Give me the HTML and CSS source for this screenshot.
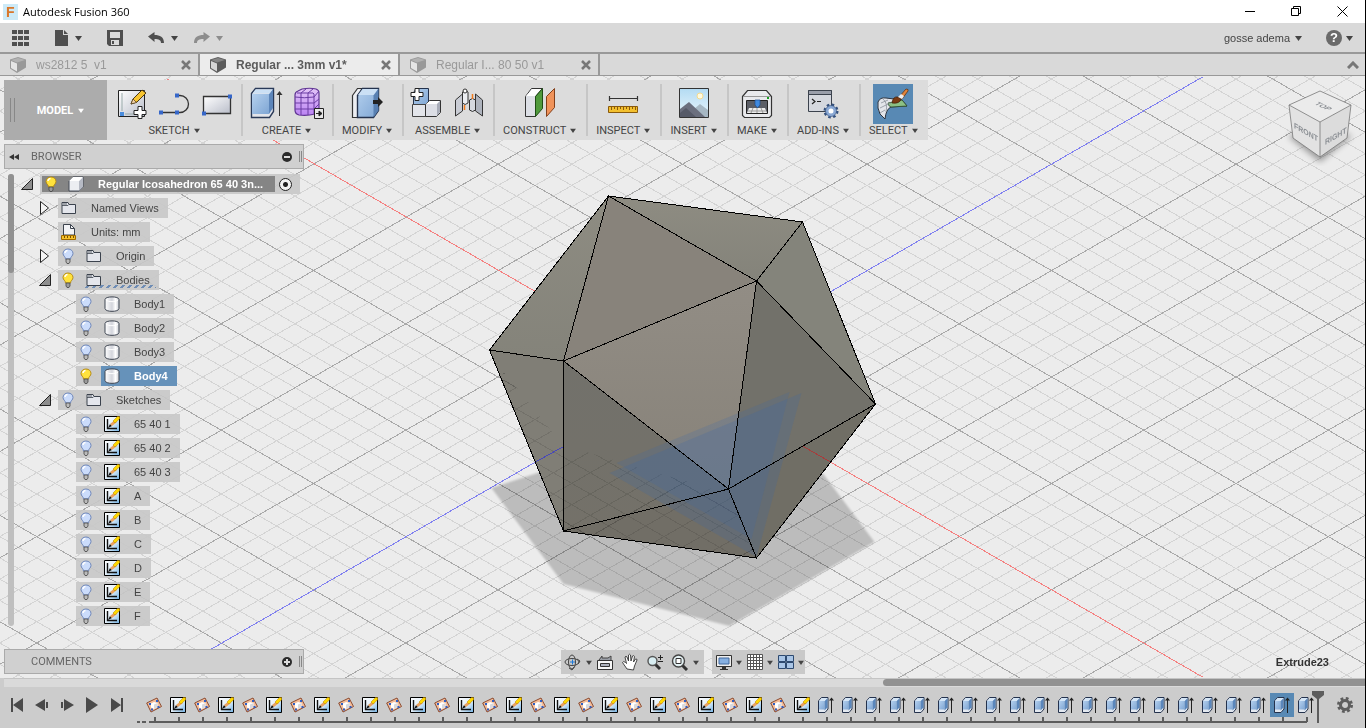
FILE: index.html
```html
<!DOCTYPE html>
<html lang="en">
<head>
    <meta charset="UTF-8">
    <meta name="viewport" content="width=device-width, initial-scale=1.0">
    <title>Autodesk Fusion 360</title>
    <link rel="stylesheet" href="styles.css">
</head>
<body>

<!-- Shared icons -->
<svg class="defs" width="0" height="0" aria-hidden="true">
    <defs>
        <linearGradient id="gWhite" x1="0" y1="0" x2="1" y2="1"><stop offset="0" stop-color="#fff"/><stop offset="1" stop-color="#b9bdc9"/></linearGradient>
        <linearGradient id="gBlue" x1="0" y1="0" x2="1" y2="1"><stop offset="0" stop-color="#b4d0ee"/><stop offset="1" stop-color="#7fa6d4"/></linearGradient>
        <linearGradient id="gCyl" x1="0" y1="0" x2="1" y2="0"><stop offset="0" stop-color="#fff"/><stop offset=".5" stop-color="#d3d5dc"/><stop offset=".75" stop-color="#fff"/><stop offset="1" stop-color="#c9ccd4"/></linearGradient>
        <linearGradient id="gPurple" x1="0" y1="0" x2="0" y2="1"><stop offset="0" stop-color="#e3c5f7"/><stop offset="1" stop-color="#bb84f3"/></linearGradient>
        <linearGradient id="gSketch" x1="0" y1="0" x2="1" y2="1"><stop offset="0" stop-color="#fff"/><stop offset=".5" stop-color="#e3f0fa"/><stop offset="1" stop-color="#6fb0e4"/></linearGradient>
        <linearGradient id="gSky" x1="0" y1="0" x2="0" y2="1"><stop offset="0" stop-color="#b3dbf3"/><stop offset="1" stop-color="#eaf6fc"/></linearGradient>
    </defs>
    <symbol id="caret" viewBox="0 0 7 6"><path d="M0 1h7L3.500 6z" fill="currentColor"/></symbol>
    <symbol id="part" viewBox="0 0 16 16">
        <path d="M0 2.500L8 0l8 2.500v8L7 16 0 11.500z" fill="currentColor"/>
        <path d="M1 4l6 2.500v8L1 11z" fill="#fff" opacity=".75"/>
        <path d="M1 3l6 2.500L15 3 8 1z" fill="#fff" opacity=".25"/>
    </symbol>
    <symbol id="close" viewBox="0 0 10 10"><path d="M1 1l8 8M9 1L1 9" stroke="currentColor" stroke-width="2.500"/></symbol>
    <symbol id="bulbOn" viewBox="0 0 12 16">
        <path d="M6 1C3 1 1 3 1 5.500 1 8 3.500 8.500 3.500 11h5C8.500 8.500 11 8 11 5.500 11 3 9 1 6 1z" fill="#ffe23c" stroke="#b58a15"/>
        <path d="M3 5c0-1 1-2.500 2.500-2.500" stroke="#fff" stroke-width="1.500" fill="none"/>
        <path d="M4 11h4v3l-1 1.500H5L4 14z" fill="#999" stroke="#444" stroke-width=".8"/>
    </symbol>
    <symbol id="bulbOff" viewBox="0 0 12 16">
        <path d="M6 1C3 1 1 3 1 5.500 1 8 3.500 8.500 3.500 11h5C8.500 8.500 11 8 11 5.500 11 3 9 1 6 1z" fill="#cbdcfb" stroke="#6d85b8"/>
        <path d="M3 5c0-1 1-2.500 2.500-2.500" stroke="#fff" stroke-width="1.500" fill="none"/>
        <path d="M4 11h4v3l-1 1.500H5L4 14z" fill="#bbb" stroke="#444" stroke-width=".8"/>
    </symbol>
    <symbol id="folder" viewBox="0 0 16 16">
        <path d="M1 13.500V2.500h6l1 2h6.500v9z" fill="#e4e6ec" stroke="#3b424d"/>
        <path d="M1 5.500h6l1-1M2 4h4" stroke="#3b424d" fill="none" stroke-width=".8"/>
    </symbol>
    <symbol id="units" viewBox="0 0 16 16">
        <path d="M2.500 11V.5h7l4 4V11z" fill="#f2f3f6" stroke="#3b424d"/><path d="M9.500.5v4h4" fill="none" stroke="#3b424d"/>
        <path d="M.5 11.500h14v4H.5z" fill="#f6c22c" stroke="#a06a00"/><path d="M3.500 12v2M6.500 12v2M9.500 12v2M12.500 12v2" stroke="#7a5000"/>
    </symbol>
    <symbol id="cube" viewBox="0 0 16 16">
        <path d="M1 5l4-4h10v10l-4 4H1z" fill="#eceef2" stroke="#444b57"/><path d="M11 5l4-4v10l-4 4z" fill="#b6bac4"/><path d="M1 5l4-4h10l-4 4z" fill="#fff"/>
    </symbol>
    <symbol id="body" viewBox="0 0 16 16">
        <path d="M1 3.500C1 0 15 0 15 3.500v9c0 3.800-14 3.800-14 0z" fill="url(#gCyl)" stroke="#3f4652"/>
        <path d="M2 4c2 2.200 10 2.200 12 0" fill="none" stroke="#fff"/>
    </symbol>
    <symbol id="sketch" viewBox="0 0 16 16">
        <path d="M.5.500h15v15H.5z" fill="url(#gSketch)" stroke="#000"/>
        <path d="M3.500 3v9.500H13" fill="none" stroke="#111" stroke-width="1.400"/>
        <path d="M4 12l2-4 2 2z" fill="#111"/><path d="M6 8l5-4 2 2-5 4z" fill="#e9a160"/>
        <path d="M9 5l4.500-4.500 2.200.2v2L11 7z" fill="#ffd800" stroke="#b98300" stroke-width=".5"/>
    </symbol>
    <symbol id="plane" viewBox="0 0 16 16">
        <path d="M.7 6L11 1l4.500 8.500L5 15z" fill="#f3bd9b" stroke="#8a4a30"/>
        <path d="M5 6.500L8 5l3.500 1v4L8 12l-3-1.500z" fill="#fff"/><path d="M8 7.500L11.500 6v4L8 12z" fill="#d9d9de"/>
        <path d="M3 6h2v2H3zM10 3h2v2h-2zM11.500 9h2v2h-2zM5 11.500h2v2H5z" fill="#2f5fc4"/>
    </symbol>
    <symbol id="extrude" viewBox="0 0 16 16">
        <path d="M.5 4l3-3.500H10V12l-3 3.500H.5z" fill="#e4e9f0" stroke="#24324d"/>
        <path d="M1 4h5.500v8.500H1z" fill="url(#gBlue)"/><path d="M6.500 4l3-3v9.500l-3 3z" fill="#5b87bc"/><path d="M1 4l3-3h5.500l-3 3z" fill="#d5e6f7"/>
        <path d="M13.500 2v14" stroke="#222"/><path d="M11 3.500L13.500.5 16 3.500z" fill="#222"/>
    </symbol>
    <symbol id="open" viewBox="0 0 12 12"><path d="M11.500.5v11H.5z" fill="#8e8e8e" stroke="#222"/></symbol>
    <symbol id="shut" viewBox="0 0 12 14"><path d="M1.500.5v13l8-6.500z" fill="#f4f4f4" stroke="#222"/></symbol>
</svg>

<!-- Title bar -->
<header class="title-bar">
    <svg class="app-logo" width="15" height="16" viewBox="0 0 15 16"><path d="M0 0h15v16H0z" fill="#cdeaf7"/><text x="3" y="13" class="logo-letter">F</text></svg>
    <h1 class="app-title">Autodesk Fusion 360</h1>
    <div class="window-buttons">
        <button aria-label="Minimize"><svg width="11" height="11"><path d="M0 5.500h10" stroke="#000"/></svg></button>
        <button aria-label="Restore"><svg width="11" height="11"><path d="M.5 2.500h7v7h-7zM2.500 2.500v-2h7v7h-2" fill="none" stroke="#000"/></svg></button>
        <button aria-label="Close"><svg width="11" height="11"><path d="M.5.500l10 10M10.500.5l-10 10" stroke="#000"/></svg></button>
    </div>
</header>

<!-- Quick access bar -->
<div class="quick-bar">
    <button class="quick" aria-label="Data panel"><svg width="18" height="18" fill="#4f4f4f"><path d="M0 1h5v4H0zM6 1h5v4H6zM12 1h5v4h-5zM0 7h5v4H0zM6 7h5v4H6zM12 7h5v4h-5zM0 13h5v4H0zM6 13h5v4H6zM12 13h5v4h-5z"/></svg></button>
    <button class="quick" aria-label="File"><svg width="14" height="16" fill="#4f4f4f"><path d="M0 0h8v5h5v11H0zM9 0l4 4H9z"/></svg><svg class="caret"><use href="#caret"/></svg></button>
    <button class="quick" aria-label="Save"><svg width="16" height="16"><path d="M0 0h16v16H2l-2-2z" fill="#4f4f4f"/><path d="M3 2h10v6H3zM4 10h8v5H4z" fill="#dadada"/><path d="M5 11h2v3H5z" fill="#4f4f4f"/></svg></button>
    <button class="quick undo" aria-label="Undo"><svg width="17" height="12"><path d="M0 4.500L6.500 0v3C12 3 16 5 16 11h-3c0-3-2-4-6.500-4v3z" fill="#4f4f4f"/></svg><svg class="caret"><use href="#caret"/></svg></button>
    <button class="quick redo" aria-label="Redo"><svg width="17" height="12"><path d="M17 4.500L10.500 0v3C5 3 1 5 1 11h3c0-3 2-4 6.500-4v3z" fill="#8d8d8d"/></svg><svg class="caret"><use href="#caret"/></svg></button>
    <button class="account">gosse adema <svg class="caret"><use href="#caret"/></svg></button>
    <button class="help" aria-label="Help"><span class="help-mark">?</span><svg class="caret"><use href="#caret"/></svg></button>
</div>

<!-- Document tabs -->
<nav class="tabs">
    <div class="tab"><svg class="tab-icon"><use href="#part"/></svg><a href="#">ws2812 5&nbsp; v1</a><button aria-label="Close tab"><svg width="10" height="10"><use href="#close"/></svg></button></div>
    <div class="tab active"><svg class="tab-icon"><use href="#part"/></svg><a href="#">Regular ... 3mm v1*</a><button aria-label="Close tab"><svg width="10" height="10"><use href="#close"/></svg></button></div>
    <div class="tab"><svg class="tab-icon"><use href="#part"/></svg><a href="#">Regular I... 80 50 v1</a><button aria-label="Close tab"><svg width="10" height="10"><use href="#close"/></svg></button></div>
    <button class="collapse" aria-label="Collapse toolbar"><svg width="12" height="8"><path d="M1 7l5-5 5 5" fill="none" stroke="#777" stroke-width="3"/></svg></button>
</nav>

<main class="viewport">
    <!-- Model canvas -->
    <svg class="canvas" viewBox="0 76 1366 602" preserveAspectRatio="xMidYMid slice">
        <defs>
            <clipPath id="lowerBody"><path d="M503 370l60 75 170 50 24 62-193-26-60-140z"/></clipPath>
            <linearGradient id="fTop" x1="0" y1="0" x2="0" y2="1"><stop offset="0" stop-color="#8e8c82"/><stop offset="1" stop-color="#84837a"/></linearGradient>
            <linearGradient id="fMid" x1="0" y1="0" x2="0" y2="1"><stop offset="0" stop-color="#928d85"/><stop offset="1" stop-color="#878279"/></linearGradient>
            <linearGradient id="fLow" x1="0" y1="0" x2="0" y2="1"><stop offset="0" stop-color="#72716b"/><stop offset="1" stop-color="#747169"/></linearGradient>
            <filter id="soft"><feGaussianBlur stdDeviation="1"/></filter>
        </defs>
        <path id="minor" class="grid-minor"/>
        <path id="major" class="grid-major"/>
        <path class="axis-z" d="M212 649L1203 77"/>
        <path class="axis-x" d="M168 79L1203 677"/>
        <path d="M492 488l72 96 166 42 145-84-52-69-100-60z" fill="#000" opacity=".2" filter="url(#soft)"/>
        <g class="faces">
            <path d="M609 196L490 350l74 11z" fill="url(#fTop)"/>
            <path d="M609 196L564 361l193-80z" fill="#88837b"/>
            <path d="M609 196l194 26-46 59z" fill="url(#fTop)"/>
            <path d="M803 222l-46 59 119 123z" fill="#84847b"/>
            <path d="M757 281l119 123-147 85z" fill="#72716a"/>
            <path d="M757 281l-193 80 165 128z" fill="url(#fMid)"/>
            <path d="M564 361v170l165-42z" fill="url(#fLow)"/>
            <path d="M564 531l193 27-28-69z" fill="#716e66"/>
            <path d="M757 558l119-154-147 85z" fill="#706e65"/>
            <path d="M490 350l74 11v170z" fill="#807e76"/>
        </g>
        <g class="through" clip-path="url(#lowerBody)">
            <use href="#minor"/>
            <use href="#major"/>
        </g>
        <path class="axis-z dim" d="M536 462l27-15"/>
        <path class="axis-x dim" d="M803 446l28 16"/>
        <path d="M802 393L610 473l147 84z" fill="#3c6ba8" opacity=".22"/>
        <path d="M790 392l-173 71 135 76z" fill="#3c6ba8" opacity=".2"/>
        <path class="edges" d="M609 196L803 222 876 404 757 558 564 531 490 350zM609 196L564 361 757 281zM803 222L757 281 876 404 729 489M757 281L729 489 564 361 490 350M564 361V531L729 489 757 558"/>
    </svg>

    <div class="overlay">
        <div class="toolbar">
            <button class="workspace">MODEL <svg class="caret"><use href="#caret"/></svg></button>

            <div class="group">
                <div class="icons">
                    <button aria-label="Create sketch"><svg class="icon" viewBox="0 0 40 40">
                        <path d="M7.500 6.500h26v26h-26z" fill="url(#gWhite)" stroke="#222"/>
                        <path d="M9 28h4v4H9z" fill="#4a8cdc"/><path d="M11 9v18M14 30h10" stroke="#9aa"/>
                        <path d="M20 20l2-5L31 6l4 3-9 9z" fill="#f7c531" stroke="#4d3813"/><path d="M20 20l2-5 3.500 3.500z" fill="#f2d2a9" stroke="#4d3813" stroke-width=".7"/>
                        <path d="M27 22.500h4v4h4v4h-4v4h-4v-4h-4v-4h4z" fill="#fff" stroke="#222"/>
                    </svg></button>
                    <button aria-label="Line"><svg class="icon" viewBox="0 0 40 40">
                        <path d="M7 28.500h19a8.500 8.500 0 0 0 0-17h-3" fill="none" stroke="#333" stroke-width="1.300"/>
                        <path d="M5 26.500h4v4H5zM21 26.500h4v4h-4zM21 9.500h4v4h-4z" fill="#3667c9"/>
                    </svg></button>
                    <button aria-label="Rectangle"><svg class="icon" viewBox="0 0 40 40">
                        <path d="M6.500 12.500h27v17h-27z" fill="url(#gWhite)" stroke="#333" stroke-width="1.300"/>
                        <path d="M31 10.500h4v4h-4zM5 27.500h4v4H5z" fill="#3667c9"/>
                    </svg></button>
                </div>
                <button class="label">SKETCH <svg class="caret"><use href="#caret"/></svg></button>
            </div>

            <div class="group">
                <div class="icons">
                    <button aria-label="Extrude"><svg class="icon" viewBox="0 0 40 40">
                        <path d="M6.500 9.500l4-5h18v23l-4 6h-18z" fill="#e2e4ea" stroke="#2a3a58" stroke-width="1.400"/>
                        <path d="M7 10h17v20H7z" fill="url(#gBlue)"/><path d="M24 10l4-5v19l-4 6z" fill="#5d86ba"/><path d="M7.500 9.500l3-4h17l-3 4z" fill="#cbe0f5"/>
                        <path d="M34.500 9v23" stroke="#333"/><path d="M31.500 11l3-4 3 4z" fill="#333"/>
                    </svg></button>
                    <button aria-label="Create form"><svg class="icon" viewBox="0 0 40 40">
                        <path d="M7 11q0-3 3-4l4-2q8-1.500 14 0 3 1 3 4v15l-4 6q-8 2-16 1-4-1-4-5z" fill="url(#gPurple)" stroke="#5f3492" stroke-width="1.200"/>
                        <path d="M7 13q9 1.500 19 0l5-6M7 19h19l5-4M7 25h19l5-5M13 31V9l5-4M20 31V9l5-4M26 30V10l-1-1H9" fill="none" stroke="#6a3da3"/>
                        <path d="M26.500 24.500h9v10h-9z" fill="#e8e8e8" stroke="#222"/><path d="M28 29.500h3M31 27l3 2.500-3 2.500z" fill="#222" stroke="#222"/>
                    </svg></button>
                </div>
                <button class="label">CREATE <svg class="caret"><use href="#caret"/></svg></button>
            </div>

            <div class="group">
                <div class="icons">
                    <button aria-label="Press pull"><svg class="icon" viewBox="0 0 40 40">
                        <path d="M5.500 11.500l5-7h4v7l-3 22h-6z" fill="#eceef2" stroke="#333" stroke-width="1.200"/>
                        <path d="M10.500 11.500l5-7h16v22l-5 7h-16z" fill="url(#gBlue)" stroke="#24324d" stroke-width="1.400"/>
                        <path d="M26.500 11.500l5-7v22l-5 7z" fill="#5880b2"/><path d="M11 11l4.500-6H31l-4.500 6z" fill="#cbe0f5"/>
                        <path d="M26 16h5v-3l5 5-5 5v-3h-5z" fill="#222"/>
                    </svg></button>
                </div>
                <button class="label">MODIFY <svg class="caret"><use href="#caret"/></svg></button>
            </div>

            <div class="group">
                <div class="icons">
                    <button aria-label="New component"><svg class="icon" viewBox="0 0 40 40">
                        <path d="M7.500 8.500l3-4h12v13l-3 3h-12z" fill="url(#gBlue)" stroke="#24324d"/>
                        <path d="M6.500 20.500h13v12h-13z" fill="#e3e5ea" stroke="#444"/><path d="M19.500 20.500l4-4h11v12l-4 4h-11z" fill="#dcdee5" stroke="#333"/><path d="M20 20l4-3h10l-3 3z" fill="#fff"/><path d="M31 20v12l3-4V17z" fill="#a8acb8"/>
                        <path d="M9 4.500h4v4h4v4h-4v4H9v-4H5v-4h4z" fill="#fff" stroke="#222"/>
                    </svg></button>
                    <button aria-label="Joint"><svg class="icon" viewBox="0 0 40 40">
                        <path d="M6.500 16l7-6V27l-7 5z" fill="#c9ccd4" stroke="#333"/><path d="M13.500 8q3-3 5.500 0v11q-3 3-5.500 0z" fill="#eceef2" stroke="#333"/>
                        <path d="M33.500 16l-7-6v17l7 5z" fill="#aeb3bd" stroke="#333"/><path d="M20.500 16q3-3 6 0v10q-3 3-6 0z" fill="#d6d9df" stroke="#333"/>
                        <path d="M15.500 21v5M23.500 10v5" stroke="#f07a1c" stroke-width="1.500"/><circle cx="16" cy="7" r="2" fill="#fff" stroke="#333"/>
                    </svg></button>
                </div>
                <button class="label">ASSEMBLE <svg class="caret"><use href="#caret"/></svg></button>
            </div>

            <div class="group">
                <div class="icons">
                    <button aria-label="Offset plane"><svg class="icon" viewBox="0 0 40 40">
                        <path d="M5.500 12.500l6-8h11l-7 8v20h-10z" fill="#dcdfe5" stroke="#333"/><path d="M6 12l6-7h9l-6 7z" fill="#fff"/>
                        <path d="M15.500 12.500l7-8v20l-7 8z" fill="#4f9a3c" stroke="#1f4d16"/>
                        <path d="M26.500 12.500l8-8v19l-8 9z" fill="#f0935a" stroke="#84401a"/>
                    </svg></button>
                </div>
                <button class="label">CONSTRUCT <svg class="caret"><use href="#caret"/></svg></button>
            </div>

            <div class="group">
                <div class="icons">
                    <button aria-label="Measure"><svg class="icon" viewBox="0 0 40 40">
                        <path d="M6 14.500h28M6.500 12v5M34.500 12v5" stroke="#333" stroke-width="1.200"/>
                        <path d="M5.500 22.500h29v6h-29z" fill="#f3c02e" stroke="#8a5a0c"/><path d="M8.500 23v3M11.500 23v2M14.500 23v3M17.500 23v2M20.500 23v3M23.500 23v2M26.500 23v3M29.500 23v2M32.500 23v3" stroke="#8a5a0c"/>
                    </svg></button>
                </div>
                <button class="label">INSPECT <svg class="caret"><use href="#caret"/></svg></button>
            </div>

            <div class="group">
                <div class="icons">
                    <button aria-label="Insert image"><svg class="icon" viewBox="0 0 40 40">
                        <path d="M5.500 4.500h29v29h-29z" fill="url(#gSky)"/><circle cx="26" cy="12" r="3" fill="#fffbe0" stroke="#f4d98e"/>
                        <path d="M20 25l6-5 8 6v7H20z" fill="#a7b8c4"/><path d="M6 25l9-7 16 15H6z" fill="#6b6f7e"/><path d="M6 29l6-5 10 9H6z" fill="#565a68"/>
                        <path d="M5.500 4.500h29v29h-29z" fill="none" stroke="#333"/>
                    </svg></button>
                </div>
                <button class="label">INSERT <svg class="caret"><use href="#caret"/></svg></button>
            </div>

            <div class="group">
                <div class="icons">
                    <button aria-label="3D print"><svg class="icon" viewBox="0 0 40 40">
                        <path d="M5.500 12.500l5-6h19l5 6v19l-2 2h-25l-2-2z" fill="#e9eaed" stroke="#333" stroke-width="1.200"/><path d="M6 12.500h28" stroke="#999"/>
                        <path d="M9.500 16.500h21v13h-21z" fill="#5b5e66" stroke="#222"/><path d="M12 24h16l2 5H10z" fill="#eee"/><path d="M11 27h18M16 24l-2 5M20 24v5M24 24l2 5" stroke="#999"/>
                        <path d="M18 16h5v5l-2.500 3-2.500-3z" fill="#3f8ae0" stroke="#1d4c8c" stroke-width=".7"/><path d="M30 13h2v2h-2z" fill="#18a020"/>
                    </svg></button>
                </div>
                <button class="label">MAKE <svg class="caret"><use href="#caret"/></svg></button>
            </div>

            <div class="group">
                <div class="icons">
                    <button aria-label="Scripts and add-ins"><svg class="icon" viewBox="0 0 40 40">
                        <path d="M5.500 6.500h23v21h-23z" fill="#d5d8df" stroke="#3b424d"/><path d="M5.500 6.500h23v4h-23z" fill="#9a9fab" stroke="#3b424d"/>
                        <path d="M9 15l3 2.500L9 20M14 17.500h4" fill="none" stroke="#222" stroke-width="1.200"/>
                        <circle cx="28" cy="27" r="6" fill="none" stroke="#34507d" stroke-width="3" stroke-dasharray="2.400 2.300"/>
                        <circle cx="28" cy="27" r="4" fill="#fff" stroke="#8aa8d4" stroke-width="3"/><circle cx="28" cy="27" r="5.500" fill="none" stroke="#34507d" stroke-width=".6"/>
                    </svg></button>
                </div>
                <button class="label">ADD-INS <svg class="caret"><use href="#caret"/></svg></button>
            </div>

            <div class="group">
                <div class="icons">
                    <button class="chosen" aria-label="Select"><svg class="icon" viewBox="0 0 40 40">
                        <path d="M5 18q2-5 8-4l16 2 5 6-16 1q-5 2-6 12l-5-5q-3-6-2-12z" fill="#e3e5ea" stroke="#2c3440"/>
                        <path d="M15 19l14-3 5 6-16 1q-3-1-3-4z" fill="#8cc084" stroke="#2c4d2c" stroke-width=".8"/><path d="M10 15q5 4 3 13M7 24l6-3 5-2M7 29l5-3M8 19l7-3" fill="none" stroke="#8b909a" stroke-width=".8"/>
                        <path d="M19 19q1-7 6-6l3 2q-1 5-9 4z" fill="#7a3a12" stroke="#3d1b05" stroke-width=".7"/><path d="M26 13L33 5q3 0 2 2l-6 8z" fill="#e0843c" stroke="#5a2a08" stroke-width=".7"/><path d="M28 10l3 2-2 3-4-2z" fill="#eee"/>
                    </svg></button>
                </div>
                <button class="label">SELECT <svg class="caret"><use href="#caret"/></svg></button>
            </div>
        </div>

        <div class="panel-bar">
            <svg class="rewind" width="10" height="8" viewBox="0 0 10 8"><path d="M5 1v6L0 4zM10 1v6L5 4z" fill="#333"/></svg>
            <h2>BROWSER</h2>
            <button aria-label="Collapse browser"><svg width="10" height="10"><circle cx="5" cy="5" r="5" fill="#2b2b2b"/><path d="M2 5h6" stroke="#ddd" stroke-width="2"/></svg></button>
        </div>

        <div class="browser">
            <div class="scrollbar"><div class="thumb"></div></div>
            <ul class="tree">
                <li class="row root"><svg class="arrow"><use href="#open"/></svg><div class="box"><div class="root-name"><svg class="bulb"><use href="#bulbOn"/></svg><span class="name"><svg class="item-icon"><use href="#cube"/></svg>Regular Icosahedron 65 40 3n...</span></div>
                    <input type="radio" class="activate" name="active" aria-label="Activate component" checked></div></li>
                <li class="row child"><svg class="arrow shut"><use href="#shut"/></svg><div class="box"><span class="name"><svg class="item-icon"><use href="#folder"/></svg>Named Views</span></div></li>
                <li class="row child"><span class="arrow"></span><div class="box"><span class="name"><svg class="item-icon"><use href="#units"/></svg>Units: mm</span></div></li>
                <li class="row child"><svg class="arrow shut"><use href="#shut"/></svg><div class="box"><svg class="bulb"><use href="#bulbOff"/></svg><span class="name"><svg class="item-icon"><use href="#folder"/></svg>Origin</span></div></li>
                <li class="row child"><svg class="arrow"><use href="#open"/></svg><div class="box"><svg class="bulb"><use href="#bulbOn"/></svg><span class="name hatched"><svg class="item-icon"><use href="#folder"/></svg>Bodies</span></div></li>
                <li class="row leaf"><div class="box"><svg class="bulb"><use href="#bulbOff"/></svg><span class="name"><svg class="item-icon"><use href="#body"/></svg>Body1</span></div></li>
                <li class="row leaf"><div class="box"><svg class="bulb"><use href="#bulbOff"/></svg><span class="name"><svg class="item-icon"><use href="#body"/></svg>Body2</span></div></li>
                <li class="row leaf"><div class="box"><svg class="bulb"><use href="#bulbOff"/></svg><span class="name"><svg class="item-icon"><use href="#body"/></svg>Body3</span></div></li>
                <li class="row leaf"><div class="box"><svg class="bulb"><use href="#bulbOn"/></svg><span class="name selected"><svg class="item-icon"><use href="#body"/></svg>Body4</span></div></li>
                <li class="row child"><svg class="arrow"><use href="#open"/></svg><div class="box"><svg class="bulb"><use href="#bulbOff"/></svg><span class="name"><svg class="item-icon"><use href="#folder"/></svg>Sketches</span></div></li>
                <li class="row leaf"><div class="box"><svg class="bulb"><use href="#bulbOff"/></svg><span class="name"><svg class="item-icon"><use href="#sketch"/></svg>65 40 1</span></div></li>
                <li class="row leaf"><div class="box"><svg class="bulb"><use href="#bulbOff"/></svg><span class="name"><svg class="item-icon"><use href="#sketch"/></svg>65 40 2</span></div></li>
                <li class="row leaf"><div class="box"><svg class="bulb"><use href="#bulbOff"/></svg><span class="name"><svg class="item-icon"><use href="#sketch"/></svg>65 40 3</span></div></li>
                <li class="row leaf"><div class="box"><svg class="bulb"><use href="#bulbOff"/></svg><span class="name"><svg class="item-icon"><use href="#sketch"/></svg>A</span></div></li>
                <li class="row leaf"><div class="box"><svg class="bulb"><use href="#bulbOff"/></svg><span class="name"><svg class="item-icon"><use href="#sketch"/></svg>B</span></div></li>
                <li class="row leaf"><div class="box"><svg class="bulb"><use href="#bulbOff"/></svg><span class="name"><svg class="item-icon"><use href="#sketch"/></svg>C</span></div></li>
                <li class="row leaf"><div class="box"><svg class="bulb"><use href="#bulbOff"/></svg><span class="name"><svg class="item-icon"><use href="#sketch"/></svg>D</span></div></li>
                <li class="row leaf"><div class="box"><svg class="bulb"><use href="#bulbOff"/></svg><span class="name"><svg class="item-icon"><use href="#sketch"/></svg>E</span></div></li>
                <li class="row leaf"><div class="box"><svg class="bulb"><use href="#bulbOff"/></svg><span class="name"><svg class="item-icon"><use href="#sketch"/></svg>F</span></div></li>
            </ul>
        </div>

        <div class="panel-bar comments">
            <span class="rewind"></span>
            <h2>COMMENTS</h2>
            <button aria-label="Add comment"><svg width="10" height="10"><circle cx="5" cy="5" r="5" fill="#2b2b2b"/><path d="M2 5h6M5 2v6" stroke="#ddd" stroke-width="2"/></svg></button>
        </div>
    </div>

    <!-- View cube -->
    <svg class="view-cube" width="80" height="90" viewBox="0 0 80 90">
        <filter id="cubeBlur"><feGaussianBlur stdDeviation="3"/></filter>
        <path d="M8 52l32 26 32-26-32-10z" fill="#000" opacity=".35" filter="url(#cubeBlur)"/>
        <path d="M9 21L40 38V73L13 54z" fill="#e2e2e2"/><path d="M71 21L40 38V73L67 54z" fill="#dcdcdc"/><path d="M40 7L9 21l31 17 31-17z" fill="#ebebeb"/>
        <path d="M40 7L9 21l31 17 31-17zM9 21l4 33 27 19 27-19 4-33M40 38v35" fill="none" stroke="#777" stroke-width=".8"/>
        <text transform="matrix(.87 .5 0 1 14 44)">FRONT</text>
        <text transform="matrix(.87 -.5 0 1 45 61)">RIGHT</text>
        <text transform="matrix(.87 .4 -.87 .4 34 20)">TOP</text>
    </svg>

    <!-- Navigation bar -->
    <div class="nav">
        <div class="nav-bar">
            <button aria-label="Orbit"><svg width="18" height="18" fill="none" stroke="#444"><ellipse cx="8" cy="9" rx="7" ry="3.500"/><ellipse cx="8" cy="9" rx="3.500" ry="7"/><path d="M6 9h5M8.500 6.500v5" stroke="#1d78d8"/><path d="M13 6l3 2-2 3M5 15l3 2 2-3"/></svg></button>
            <button class="drop" aria-label="Orbit options"><svg class="caret"><use href="#caret"/></svg></button>
            <button aria-label="Look at"><svg width="18" height="18"><path d="M3 7l3-4v2h6l3-2v4" fill="#9a9ea6" stroke="#444"/><path d="M1.500 7.500h15v9h-15z" fill="#f6f6f6" stroke="#333"/><path d="M4.500 10.500h9v3h-9z" fill="#aeb2bd" stroke="#333"/></svg></button>
            <button aria-label="Pan"><svg width="18" height="18"><path d="M6 16L1.500 9.500q1-2 3 0l1 1L4 4q1-1.500 2 0l1.500 4L7.500 2q1-1.500 2 0l.5 6 1.500-5q1.500-1 2 .5L12.500 9l2-3q1.500-.5 1.500 1L13.500 13l-1 4z" fill="#fff" stroke="#333" stroke-width=".9"/></svg></button>
            <button aria-label="Zoom"><svg width="18" height="18"><path d="M9 11l5 5" stroke="#333" stroke-width="3"/><circle cx="6.500" cy="8" r="4.500" fill="#d9eef2" stroke="#555" stroke-width="1.400"/><path d="M12 4.500h5M14.500 2v5M12 8.500h5" stroke="#222"/></svg></button>
            <button aria-label="Fit"><svg width="18" height="18"><path d="M11 12l5 5" stroke="#333" stroke-width="3"/><circle cx="7.500" cy="8" r="6" fill="#e4f1f3" stroke="#444" stroke-width="1.400"/><path d="M5 5.500h5v5H5z" fill="#fff" stroke="#333"/></svg></button>
            <button class="drop" aria-label="Fit options"><svg class="caret"><use href="#caret"/></svg></button>
        </div>
        <div class="nav-bar display">
            <button aria-label="Display settings"><svg width="18" height="18"><path d="M1.500 2.500h15v11h-15z" fill="#eee" stroke="#333"/><path d="M4 5h10v6H4z" fill="#86b0e2" stroke="#41699e"/><path d="M7 14h4v2h2v1H5v-1h2z" fill="#333"/></svg></button>
            <button class="drop" aria-label="Display options"><svg class="caret"><use href="#caret"/></svg></button>
            <button aria-label="Grid settings"><svg width="18" height="18"><path d="M1.500 1.500h15v15h-15z" fill="#fff"/><path d="M1.500 1.500h15v15h-15zM4.500 1v15M7.500 1v15M10.500 1v15M13.500 1v15M1 4.500h15M1 7.500h15M1 10.500h15M1 13.500h15" fill="none" stroke="#555"/></svg></button>
            <button class="drop" aria-label="Grid options"><svg class="caret"><use href="#caret"/></svg></button>
            <button aria-label="Viewports"><svg width="18" height="18" fill="#a9c5e6" stroke="#2e4a70"><path d="M1.500 2.500h7v6h-7zM9.500 2.500h7v6h-7zM1.500 9.500h7v6h-7zM9.500 9.500h7v6h-7z"/></svg></button>
            <button class="drop" aria-label="Viewport options"><svg class="caret"><use href="#caret"/></svg></button>
        </div>
    </div>
    <span class="feature-name">Extrude23</span>
</main>

<!-- Timeline -->
<footer class="timeline">
    <div class="timeline-scroll"><div class="timeline-thumb"></div></div>
    <div class="timeline-body">
        <div class="playback">
            <button aria-label="First"><svg width="14" height="14" fill="#4a4a4a"><path d="M1 0h2v14H1zM13 0v14L3 7z"/></svg></button>
            <button aria-label="Step back"><svg width="14" height="14" fill="#4a4a4a"><path d="M10 1v12L0 7zM11 4h2v6h-2z"/></svg></button>
            <button aria-label="Step forward"><svg width="14" height="14" fill="#4a4a4a"><path d="M4 1v12l10-6zM1 4h2v6H1z"/></svg></button>
            <button aria-label="Play"><svg width="14" height="16" fill="#4a4a4a"><path d="M1 0v16l12-8z"/></svg></button>
            <button aria-label="Last"><svg width="14" height="14" fill="#4a4a4a"><path d="M11 0h2v14h-2zM1 0v14l10-7z"/></svg></button>
        </div>
        <span class="dashes"></span>
        <div class="features" id="features"></div>
        <svg class="marker" width="12" height="32"><path d="M0 0h12v4L7 8v24H5V8L0 4z" fill="#5d5d5d"/></svg>
        <button class="settings" aria-label="Timeline settings"><svg width="18" height="18"><circle cx="9" cy="9" r="6.500" fill="none" stroke="#5d5d5d" stroke-width="3" stroke-dasharray="2.700 2.400"/><circle cx="9" cy="9" r="4.500" fill="none" stroke="#5d5d5d" stroke-width="3"/></svg></button>
    </div>
</footer>

<script>
    // Ground grid: two families of lines crossing at the origin
    const origin = { x: 683, y: 377 };
    const halfW = 92.25;
    const halfH = 53.2;
    const slope = halfH / halfW;
    let minor = '';
    let major = '';

    for (let i = -70; i <= 70; i++) {
        const x = origin.x + i * halfW * 2 / 5;
        const dy = 400;
        const dx = dy / slope;
        const lines = `M${x - dx} ${origin.y - dy}L${x + dx} ${origin.y + dy}` +
                      `M${x + dx} ${origin.y - dy}L${x - dx} ${origin.y + dy}`;
        if (i === 0) continue;
        if (i % 5 === 0) {
            major += lines;
        } else {
            minor += lines;
        }
    }
    document.getElementById('minor').setAttribute('d', minor);
    document.getElementById('major').setAttribute('d', major);

    // Timeline features
    const features = document.getElementById('features');
    for (let i = 0; i < 49; i++) {
        let type = 'extrude';
        if (i < 28) {
            type = i % 2 === 0 ? 'plane' : 'sketch';
        }
        const button = document.createElement('button');
        button.className = 'feature' + (i === 47 ? ' current' : '');
        button.setAttribute('aria-label', type + ' ' + (i + 1));
        button.innerHTML = `<svg width="16" height="16"><use href="#${type}"/></svg>`;
        features.appendChild(button);
    }
</script>

</body>
</html>
```
FILE: styles.css
```css
/* General Reset */
* {
    margin: 0;
    padding: 0;
    box-sizing: border-box;
}

body {
    display: flex;
    flex-direction: column;
    height: 100vh;
    min-height: 600px;
    overflow: hidden;
    border-right: 1px solid #000;
    background-color: #ececec;
    color: #444;
    font-family: "Liberation Sans", Arial, sans-serif;
    font-size: 11px;
}

button {
    border: none;
    background: none;
    color: inherit;
    font: inherit;
    cursor: pointer;
}

svg {
    display: block;
    flex: none;
}

.defs {
    position: absolute;
}

.caret {
    width: 7px;
    height: 6px;
}

/* Title bar */
.title-bar {
    display: flex;
    align-items: center;
    flex: none;
    height: 23px;
    padding-left: 3px;
    background-color: #fff;
}

.logo-letter {
    fill: #d9772b;
    font-size: 14px;
    font-weight: bold;
}

.app-title {
    margin-left: 5px;
    color: #000;
    font-family: "Open Sans", "Noto Sans", sans-serif;
    font-size: 11px;
    font-weight: normal;
}

.window-buttons {
    display: flex;
    align-self: stretch;
    margin-left: auto;
}

.window-buttons button {
    display: flex;
    justify-content: center;
    align-items: center;
    width: 46px;
}

/* Quick access bar */
.quick-bar {
    display: flex;
    align-items: center;
    flex: none;
    height: 31px;
    padding: 0 12px;
    border-bottom: 2px solid #999;
    background-color: #d9d9d9;
}

.quick {
    display: flex;
    align-items: center;
    gap: 6px;
    margin-right: 25px;
}

.undo {
    margin-right: 15px;
}

.redo {
    color: #8d8d8d;
}

.account {
    display: flex;
    align-items: center;
    gap: 5px;
    margin-left: auto;
}

.help {
    display: flex;
    align-items: center;
    gap: 4px;
    margin-left: 24px;
}

.help-mark {
    width: 16px;
    border-radius: 8px;
    background-color: #6a6a6a;
    color: #fff;
    font-size: 13px;
    font-weight: bold;
    line-height: 16px;
}

/* Document tabs */
.tabs {
    display: flex;
    flex: none;
    height: 22px;
    border-bottom: 1px solid #999;
    background-color: #d9d9d9;
}

.tab {
    display: flex;
    align-items: center;
    width: 200px;
    padding: 0 7px 0 10px;
    border-right: 2px solid #999;
    color: #999;
    font-size: 12px;
}

.tab a {
    flex: 1;
    margin-left: 10px;
    color: inherit;
    text-decoration: none;
}

.tab button {
    color: #777;
}

.tab-icon {
    width: 16px;
    height: 16px;
}

.tab.active {
    background-color: #ececec;
    color: #5c5c5c;
    font-weight: bold;
}

.collapse {
    margin-left: auto;
    padding: 0 6px;
}

/* Viewport */
.viewport {
    position: relative;
    flex: 1;
    min-height: 0;
}

.canvas {
    position: absolute;
    width: 100%;
    height: 100%;
}

.grid-minor,
.grid-major,
.axis-x,
.axis-z {
    fill: none;
    shape-rendering: crispEdges;
}

.grid-minor {
    stroke: #d4d4d4;
}

.grid-major {
    stroke: #a9a9a9;
}

.axis-z {
    stroke: #8080f0;
}

.axis-x {
    stroke: #f58080;
}

.axis-z.dim {
    stroke: #4848b8;
}

.axis-x.dim {
    stroke: #a83c3c;
}

.edges {
    fill: none;
    stroke: #000;
    shape-rendering: crispEdges;
}

.through {
    opacity: 0.6;
    mix-blend-mode: multiply;
}

.overlay {
    position: relative;
    display: flex;
    flex-direction: column;
    align-items: flex-start;
    height: 100%;
    padding: 4px;
}

/* Toolbar */
.toolbar {
    display: flex;
    height: 60px;
    background-color: #dcdcdc;
    font-family: Roboto, sans-serif;
}

.workspace {
    display: flex;
    justify-content: center;
    align-items: center;
    gap: 5px;
    width: 103px;
    padding-left: 10px;
    background: linear-gradient(90deg, transparent 6px, #888 6px, #888 7px, transparent 7px, transparent 10px, #888 10px, #888 11px, transparent 11px) 0 18px / 100% 24px no-repeat #acacac;
    color: #fff;
    font-weight: bold;
}

.workspace .caret,
.label .caret {
    width: 6px;
    height: 5px;
}

.group {
    display: flex;
    flex-direction: column;
    align-items: center;
    padding: 4px 4px 0;
}

.group + .group {
    background: linear-gradient(#c6c6c6, #c6c6c6) 0 4px / 2px 52px no-repeat;
}

.icons {
    display: flex;
    gap: 3px;
}

.icon {
    width: 40px;
    height: 40px;
}

.icons .chosen {
    background-color: #5889b4;
}

.label {
    display: flex;
    align-items: center;
    gap: 4px;
    padding: 0 6px;
    line-height: 13px;
}

/* Side panels */
.panel-bar {
    display: flex;
    align-items: center;
    width: 300px;
    height: 25px;
    margin-top: 4px;
    padding: 0 11px 0 4px;
    border: 1px solid #aaa;
    background: linear-gradient(90deg, #888 1px, transparent 1px, transparent 2px, #888 2px, #888 3px, transparent 3px) right 0 center / 4px 11px no-repeat #d0d0d0;
    color: #666;
    font-family: Roboto, sans-serif;
}

.panel-bar h2 {
    flex: 1;
    margin-left: 12px;
    font-size: 11px;
    font-weight: normal;
}

.rewind {
    width: 10px;
}

.comments {
    margin-top: auto;
}

.browser {
    display: flex;
    margin-top: 5px;
    padding-left: 4px;
}

.scrollbar {
    width: 6px;
    border-radius: 3px;
    background-color: #bfbfbf;
}

.thumb {
    height: 22%;
    border-radius: 3px;
    background-color: #919191;
}

.tree {
    display: flex;
    flex-direction: column;
    gap: 4px;
    padding-left: 7px;
    list-style: none;
}

.row {
    display: flex;
    align-items: center;
    height: 20px;
}

.child {
    padding-left: 18px;
}

.leaf {
    padding-left: 55px;
}

.arrow {
    width: 12px;
    height: 12px;
    margin-right: 7px;
}

.shut {
    height: 14px;
}

.box {
    display: flex;
    align-items: center;
    height: 20px;
    background-color: rgba(200, 200, 200, 0.9);
}

.bulb {
    width: 12px;
    height: 16px;
    margin: 0 9px 0 4px;
}

.name {
    display: flex;
    align-items: center;
    gap: 14px;
    height: 20px;
    padding: 0 9px 0 3px;
}

.item-icon {
    width: 16px;
    height: 16px;
}

.hatched {
    background: repeating-linear-gradient(135deg, transparent 0, transparent 3px, #6f8db5 3px, #6f8db5 5px) 0 15px / 96% 3px no-repeat;
}

.selected {
    background-color: #6692ba;
    color: #fff;
    font-weight: bold;
}

.root-name {
    display: flex;
    align-items: center;
    height: 16px;
    margin-left: 2px;
    background-color: #858585;
    color: #fff;
    font-weight: bold;
}

.root-name .bulb {
    margin: 0 8px 0 3px;
}

.root-name .name {
    padding-right: 12px;
}

.activate {
    appearance: none;
    width: 13px;
    height: 13px;
    margin: 0 8px 0 4px;
    border: 1px solid #222;
    border-radius: 7px;
    background: radial-gradient(circle, #222 2px, #f4f4f4 3px);
}

/* View cube */
.view-cube {
    position: absolute;
    top: 8px;
    right: 5px;
}

.view-cube text {
    fill: #8b8f94;
    font-size: 8px;
    font-weight: bold;
}

/* Navigation bar */
.nav {
    position: absolute;
    bottom: 4px;
    left: 50%;
    display: flex;
    gap: 8px;
    transform: translateX(-50%);
}

.nav-bar {
    display: flex;
    height: 24px;
    padding-right: 4px;
    background-color: #c9c9c9;
}

.nav-bar button {
    display: flex;
    justify-content: center;
    align-items: center;
    width: 25px;
}

.display {
    padding-right: 0;
}

.display button {
    width: 24px;
}

.nav-bar .drop {
    width: 7px;
}

.nav-bar .caret {
    width: 6px;
    height: 5px;
}

.feature-name {
    position: absolute;
    right: 36px;
    bottom: 10px;
    color: #333;
    font-weight: bold;
}

/* Timeline */
.timeline {
    flex: none;
    height: 50px;
    background-color: #ccc;
}

.timeline-scroll {
    display: flex;
    justify-content: flex-end;
    height: 9px;
    margin-left: 4px;
    border-top: 1px solid #c4c4c4;
    background-color: #dadada;
}

.timeline-thumb {
    width: 482px;
    height: 7px;
    border-radius: 4px 0 0 4px;
    background-color: #919191;
}

.timeline-body {
    display: flex;
    height: 41px;
    padding-top: 4px;
}

.playback {
    display: flex;
    gap: 11px;
    width: 137px;
    height: 27px;
    padding-left: 10px;
}

.dashes {
    width: 3px;
    height: 2px;
    margin: 30px 2px 0 0;
    background-color: #5d5d5d;
}

.features {
    display: flex;
    height: 32px;
    background:
        linear-gradient(#5d5d5d, #5d5d5d) 0 30px / 4px 2px no-repeat,
        linear-gradient(#5d5d5d, #5d5d5d) 7px 30px / calc(100% - 18px) 2px no-repeat;
}

.feature {
    display: flex;
    justify-content: center;
    width: 24px;
    padding-top: 6px;
    background: linear-gradient(#5d5d5d, #5d5d5d) 12px 26px / 2px 5px no-repeat;
}

.feature.current {
    background:
        linear-gradient(#5889b4, #5889b4) 0 2px / 24px 24px no-repeat,
        linear-gradient(#5d5d5d, #5d5d5d) 12px 26px / 2px 5px no-repeat;
}

.marker {
    margin-left: -6px;
}

.settings {
    margin: 0 auto;
    height: 27px;
}
```
